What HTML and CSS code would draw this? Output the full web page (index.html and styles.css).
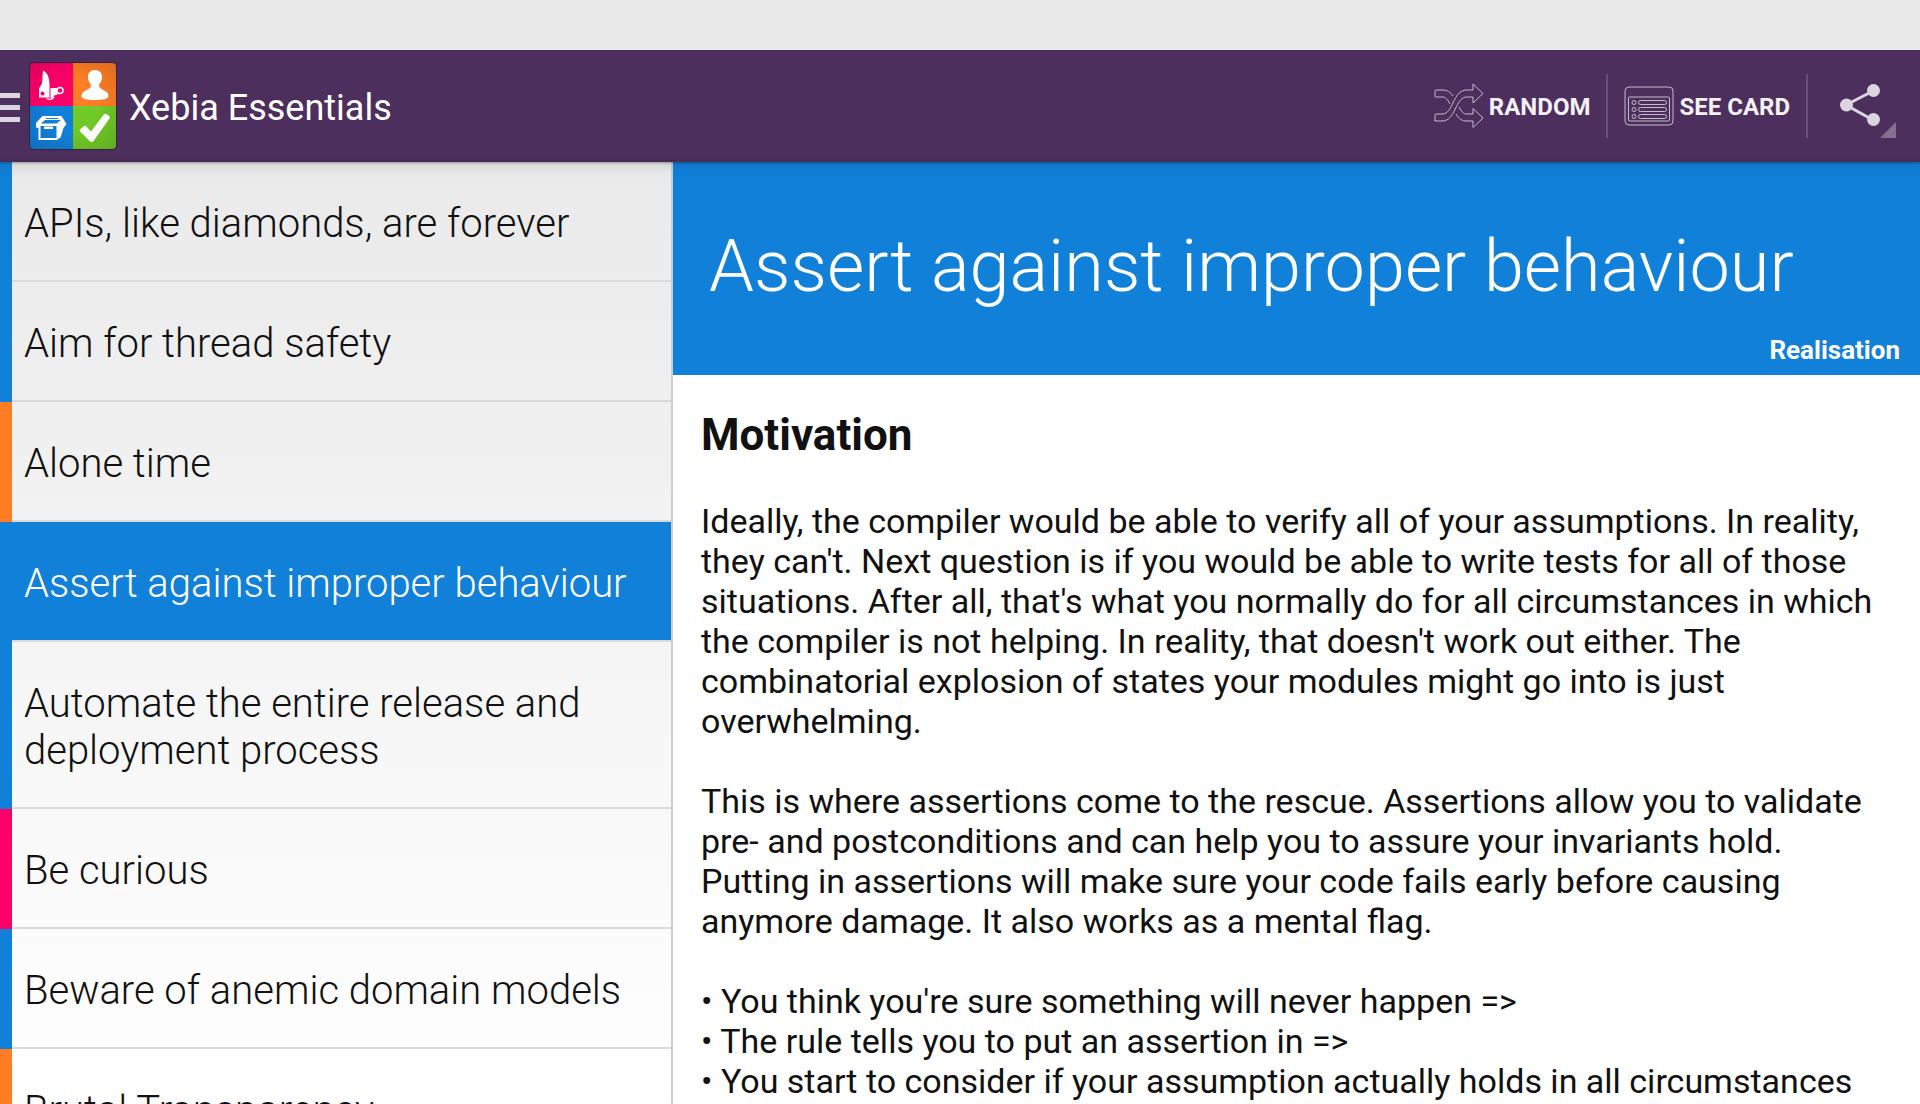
FILE: index.html
```html
<!DOCTYPE html>
<html lang="en">
<head>
<meta charset="utf-8">
<title>Xebia Essentials</title>
<link rel="stylesheet" href="styles.css">
</head>
<body>
<div class="status-bar"></div>
<header class="action-bar">
  <button class="menu-button" aria-label="Open menu"><span></span><span></span><span></span></button>
  <svg class="logo" viewBox="0 0 88 88" aria-hidden="true">
    <defs>
      <clipPath id="tile"><rect x="1" y="1" width="86" height="86" rx="4"/></clipPath>
      <radialGradient id="shade" cx=".5" cy=".5" r=".72"><stop offset=".4" stop-color="#000" stop-opacity="0"/><stop offset="1" stop-color="#000" stop-opacity=".15"/></radialGradient>
    </defs>
    <rect width="88" height="88" rx="5" fill="#351f42"/>
    <g clip-path="url(#tile)">
      <path fill="#ff0069" d="M0 0h44v44H0z"/><path fill="#ff7d24" d="M44 0h44v44H44z"/>
      <path fill="#1180d9" d="M0 44h44v44H0z"/><path fill="#70c926" d="M44 44h44v44H44z"/>
      <path fill="url(#shade)" d="M0 0h88v88H0z"/>
    </g>
    <path fill="#fff" d="M14 8.500c4 2 6.500 6 6.500 14.500v12.500H10v-9l3-5z"/>
    <path fill="#fff" d="M21.500 26H31v2l-3 3 1 1.500-4 1-1.500 2.500h-2z"/>
    <circle cx="13.500" cy="31.500" r="2" fill="#ff0069"/>
    <circle cx="31" cy="28.500" r="3" fill="#ff0069" stroke="#fff" stroke-width="1.500"/>
    <path fill="none" stroke="#fff" stroke-width="1.200" d="M25 34.500c-1 3-4 3.500-7.500 2"/>
    <path fill="#fff" d="M66 8c4.500 0 7.500 3 7 8-.4 4-2.800 5.500-3 8 1 4.500 9.500 4 9.500 10 0 3-6 4-13.500 4s-13.500-1-13.500-4c0-6 8.500-5.500 9.500-10-.2-2.500-2.600-4-3-8-.5-5 2.500-8 7-8z"/>
    <path fill="#fff" fill-rule="evenodd" d="M13.500 54h19l5 8-3 4-3 9.500-4 2.500H9.500V66L7 65.500V61zM11.500 64v12h16V64zM12 61.500h15.500l4.500-3.500H16z"/>
    <path fill="#fff" d="M15 64.500h9v2.500h-9z"/>
    <path fill="#1180d9" d="m16 57 1.500-1H30l-1.500 1z"/>
    <path fill="#fff" d="m51 67.500 4-3.500q1-.8 2 .2l5 5.300 12.500-16.500q1.500-2 3.500-.5l2 1.500q1.500 1 .5 2.500L64.500 79q-1.500 2-3.500.2L51 69.500q-1-1 0-2z"/>
  </svg>
  <h1 class="app-title">Xebia Essentials</h1>
  <nav class="actions">
    <button class="action">
      <svg class="action-icon" viewBox="0 0 50 46" aria-hidden="true">
        <path d="M1 38V32q0-1 1-1h6c12 0 10-24 25-24h6V1l10 9.500L39 20v-6h-6C21 14 22 38 8 38H2q-1 0-1-1z"/>
        <path d="M19 13C16 9 14 7 8 7H2Q1 7 1 8v5q0 1 1 1h6c4 0 5 2 8 7M22 31c3 5 6 7 11 7h6v6.500L49 35l-10-9.500V31h-6c-4 0-5-2-8-7"/>
      </svg>
      <span>RANDOM</span>
    </button>
    <button class="action">
      <svg class="action-icon" viewBox="0 0 50 46" aria-hidden="true">
        <rect x="1" y="4" width="48" height="38" rx="4"/><rect x="4.500" y="14" width="41" height="24" rx="1"/>
        <circle cx="10" cy="19.500" r="2"/><circle cx="10" cy="26.500" r="2"/><circle cx="10" cy="33.500" r="2"/>
        <rect x="14.500" y="17.500" width="28" height="4" rx="2"/><rect x="14.500" y="24.500" width="28" height="4" rx="2"/><rect x="14.500" y="31.500" width="28" height="4" rx="2"/>
      </svg>
      <span>SEE CARD</span>
    </button>
    <button class="action share" aria-label="Share">
      <svg class="share-icon" viewBox="0 0 56 54" aria-hidden="true">
        <path fill="none" stroke="#dbd5df" stroke-width="3" d="m33 7-27 14 27 15"/>
        <g fill="#dbd5df"><circle cx="33.500" cy="6.500" r="6.500"/><circle cx="6.500" cy="21" r="6.500"/><circle cx="33.500" cy="35.500" r="6.500"/></g>
        <path fill="#846f8f" d="M56 38v16H40z"/>
      </svg>
    </button>
  </nav>
</header>
<main class="panes">
  <nav class="card-list" aria-label="Cards">
    <a class="card blue" href="#">APIs, like diamonds, are forever</a>
    <a class="card blue" href="#">Aim for thread safety</a>
    <a class="card orange" href="#">Alone time</a>
    <a class="card blue selected" href="#" aria-current="page">Assert against improper behaviour</a>
    <a class="card blue" href="#">Automate the entire release and deployment process</a>
    <a class="card pink" href="#">Be curious</a>
    <a class="card blue" href="#">Beware of anemic domain models</a>
    <a class="card orange" href="#">Brutal Transparency</a>
  </nav>
  <article class="detail">
    <header class="hero">
      <h2 class="hero-title">Assert against improper behaviour</h2>
      <p class="category">Realisation</p>
    </header>
    <div class="content">
      <h3>Motivation</h3>
      <p>Ideally, the compiler would be able to verify all of your assumptions. In reality, they can't. Next question is if you would be able to write tests for all of those situations. After all, that's what you normally do for all circumstances in which the compiler is not helping. In reality, that doesn't work out either. The combinatorial explosion of states your modules might go into is just overwhelming.</p>
      <p>This is where assertions come to the rescue. Assertions allow you to validate pre- and postconditions and can help you to assure your invariants hold. Putting in assertions will make sure your code fails early before causing anymore damage. It also works as a mental flag.</p>
      <ul>
        <li>You think you're sure something will never happen =&gt;</li>
        <li>The rule tells you to put an assertion in =&gt;</li>
        <li>You start to consider if your assumption actually holds in all circumstances</li>
      </ul>
    </div>
  </article>
</main>
</body>
</html>
```
FILE: styles.css
```css
* { box-sizing: border-box; }
body {
  margin: 0;
  height: 100vh;
  display: flex;
  flex-direction: column;
  overflow: hidden;
  font-family: Roboto, "Noto Sans", sans-serif;
  color: #111;
  background: #fff;
}
h1, h2, h3, p, ul { margin: 0; padding: 0; }
button {
  border: 0;
  padding: 0;
  background: none;
  font-family: inherit;
  color: inherit;
}
.status-bar { flex: none; height: 50px; background: #e9e9e9; }
.action-bar {
  flex: none;
  display: flex;
  align-items: center;
  height: 112px;
  padding-right: 24px;
  background: linear-gradient(#4d2f5d 104px, #472a54);
  box-shadow: 0 1px 2px rgba(0, 0, 0, .3), 0 2px 14px rgba(0, 0, 0, .15);
  clip-path: inset(0 0 -24px 0);
  color: #fff;
  z-index: 1;
}
.menu-button { display: flex; flex-direction: column; gap: 7px; width: 20px; margin-top: 3px; }
.menu-button span { height: 5px; background: #dbd5df; }
.logo { flex: none; width: 88px; height: 88px; margin-left: 9px; }
.app-title { margin-left: 12px; padding-top: 3px; font-size: 36px; font-weight: 400; line-height: 42px; }
.actions { display: flex; margin-left: auto; }
.action {
  display: flex;
  align-items: center;
  gap: 5px;
  height: 64px;
  padding: 0 16px;
  border-right: 2px solid #68507a;
  font-size: 24px;
  font-weight: 700;
  color: #f3f1f4;
}
.action span { padding-top: 2px; }
.action-icon { width: 50px; height: 46px; fill: none; stroke: #c5bccb; stroke-width: 1; }
.share { align-items: flex-end; padding: 0 0 0 32px; border: 0; }
.share-icon { width: 56px; height: 54px; }
.panes { flex: 1; display: flex; min-height: 0; }
.card-list {
  flex: 0 0 673px;
  max-width: 50%;
  overflow: hidden;
  background: linear-gradient(#eaeaea, #fff);
  border-right: 2px solid #cdcdcd;
}
.card {
  display: block;
  position: relative;
  padding: 38px 20px 35px 24px;
  font-size: 40px;
  font-weight: 300;
  line-height: 47px;
  color: inherit;
  text-decoration: none;
}
.card::before { content: ""; position: absolute; left: 0; top: 0; bottom: 0; width: 12px; background: var(--topic); }
.card::after { content: ""; position: absolute; left: 12px; right: 0; bottom: 0; height: 2px; background: #dadada; }
.blue { --topic: #1180d9; }
.orange { --topic: #ff7d24; }
.pink { --topic: #ff0069; }
.selected { background: #1180d9; color: #fff; }
.detail { flex: 1; min-width: 0; overflow: hidden; }
.hero { padding: 63px 20px 10px 36px; background: #1180d9; color: #fff; }
.hero-title { font-size: 72px; font-weight: 300; line-height: 84px; }
.category { margin-top: 26px; font-size: 26px; font-weight: 700; line-height: 30px; text-align: right; }
.content { padding: 34px 28px 0; font-size: 34px; line-height: 40px; }
.content h3 { margin-bottom: 40px; font-size: 44px; font-weight: 700; line-height: 52px; }
.content p { margin-bottom: 40px; }
.content ul { list-style: none; }
.content li::before { content: "• "; }
```
